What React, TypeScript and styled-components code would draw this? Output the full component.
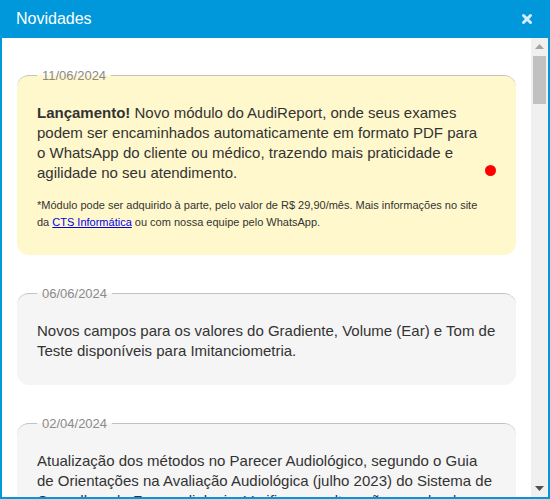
import React from 'react';
import styled, { createGlobalStyle } from 'styled-components';

const GlobalStyle = createGlobalStyle`
  html, body {
    margin: 0;
    padding: 0;
    background: #ffffff;
  }
  body {
    font-family: "Liberation Sans", Arial, sans-serif;
  }
`;

const Window = styled.div`
  width: 550px;
  height: 499px;
  box-sizing: border-box;
  background: #0098da;
  padding: 0 2px 2px 2px;
  display: flex;
  flex-direction: column;
`;

const Header = styled.div`
  height: 38px;
  flex-shrink: 0;
  display: flex;
  align-items: center;
  justify-content: space-between;
  padding: 0 15px 0 14px;
`;

const Title = styled.h1`
  margin: 0;
  font-size: 16px;
  font-weight: normal;
  color: #ffffff;
`;

const CloseButton = styled.button`
  background: none;
  border: none;
  padding: 0;
  color: #d6eefb;
  display: flex;
  align-items: center;
  cursor: pointer;
`;

const Body = styled.div`
  flex: 1;
  min-height: 0;
  display: flex;
  background: #ffffff;
`;

const Content = styled.div`
  flex: 1;
  overflow: hidden;
  padding: 30px 15px 0 15px;
  display: flex;
  flex-direction: column;
  gap: 31px;
`;

const Card = styled.fieldset<{ $tone: 'highlight' | 'plain' }>`
  margin: 0;
  padding: 20px 20px 24px 20px;
  border: none;
  border-top: 1px solid #c2c2c2;
  border-radius: 12px;
  background: ${props => (props.$tone === 'highlight' ? '#fff8cc' : '#f5f5f5')};
  flex-shrink: 0;
`;

const DateLegend = styled.legend`
  padding: 0 5px;
  font-size: 13px;
  color: #8a8a8a;
`;

const CardRow = styled.div`
  display: flex;
  align-items: center;
  gap: 4px;
`;

const CardText = styled.div`
  flex: 1;
  min-width: 0;
`;

const Text = styled.p`
  margin: 0;
  font-size: 15px;
  line-height: 20px;
  color: #333333;

  strong {
    font-weight: bold;
  }
`;

const Note = styled.p`
  margin: 14px 0 0 0;
  font-size: 11px;
  line-height: 17px;
  color: #333333;

  a {
    color: #0000ee;
  }
`;

const UnreadDot = styled.span`
  flex-shrink: 0;
  margin-top: 6px;
  width: 11px;
  height: 11px;
  border-radius: 50%;
  background: #ff0000;
`;

const Scrollbar = styled.div`
  width: 17px;
  flex-shrink: 0;
  background: #f0f0f0;
  display: flex;
  flex-direction: column;
  align-items: center;
`;

const ScrollArrow = styled.div`
  width: 17px;
  height: 17px;
  display: flex;
  align-items: center;
  justify-content: center;
`;

const ScrollThumb = styled.div`
  width: 13px;
  height: 48px;
  margin-top: 1px;
  background: #c1c1c1;
`;

const ScrollTrack = styled.div`
  flex: 1;
`;

interface NewsItem {
  date: string;
  tone: 'highlight' | 'plain';
  unread?: boolean;
  body: React.ReactNode;
}

const news: NewsItem[] = [
  {
    date: '11/06/2024',
    tone: 'highlight',
    unread: true,
    body: (
      <>
        <Text>
          <strong>Lançamento!</strong> Novo módulo do AudiReport, onde seus exames podem ser
          encaminhados automaticamente em formato PDF para o WhatsApp do cliente ou médico,
          trazendo mais praticidade e agilidade no seu atendimento.
        </Text>
        <Note>
          *Módulo pode ser adquirido à parte, pelo valor de R$ 29,90/mês. Mais informações no site
          da <a href="#">CTS Informática</a> ou com nossa equipe pelo WhatsApp.
        </Note>
      </>
    ),
  },
  {
    date: '06/06/2024',
    tone: 'plain',
    body: (
      <Text>
        Novos campos para os valores do Gradiente, Volume (Ear) e Tom de Teste disponíveis para
        Imitanciometria.
      </Text>
    ),
  },
  {
    date: '02/04/2024',
    tone: 'plain',
    body: (
      <Text>
        Atualização dos métodos no Parecer Audiológico, segundo o Guia de Orientações na Avaliação
        Audiológica (julho 2023) do Sistema de Conselhos de Fonoaudiologia. Verifique as
        alterações nos laudos.
      </Text>
    ),
  },
];

const App: React.FC = () => {
  return (
    <>
      <GlobalStyle />
      <Window>
        <Header>
          <Title>Novidades</Title>
          <CloseButton aria-label="Fechar">
            <svg width="12" height="12" viewBox="0 0 12 12">
              <path d="M2.5 2.5L9.5 9.5M9.5 2.5L2.5 9.5" stroke="currentColor" strokeWidth="3" strokeLinecap="round" />
            </svg>
          </CloseButton>
        </Header>

        <Body>
          <Content>
            {news.map(item => (
              <Card key={item.date} $tone={item.tone}>
                <DateLegend>{item.date}</DateLegend>
                {item.unread ? (
                  <CardRow>
                    <CardText>{item.body}</CardText>
                    <UnreadDot />
                  </CardRow>
                ) : (
                  item.body
                )}
              </Card>
            ))}
          </Content>

          <Scrollbar>
            <ScrollArrow>
              <svg width="9" height="5" viewBox="0 0 9 5">
                <path d="M0 5L4.5 0L9 5Z" fill="#a3a3a3" />
              </svg>
            </ScrollArrow>
            <ScrollThumb />
            <ScrollTrack />
            <ScrollArrow>
              <svg width="9" height="5" viewBox="0 0 9 5">
                <path d="M0 0L9 0L4.5 5Z" fill="#505050" />
              </svg>
            </ScrollArrow>
          </Scrollbar>
        </Body>
      </Window>
    </>
  );
};

export default App;
